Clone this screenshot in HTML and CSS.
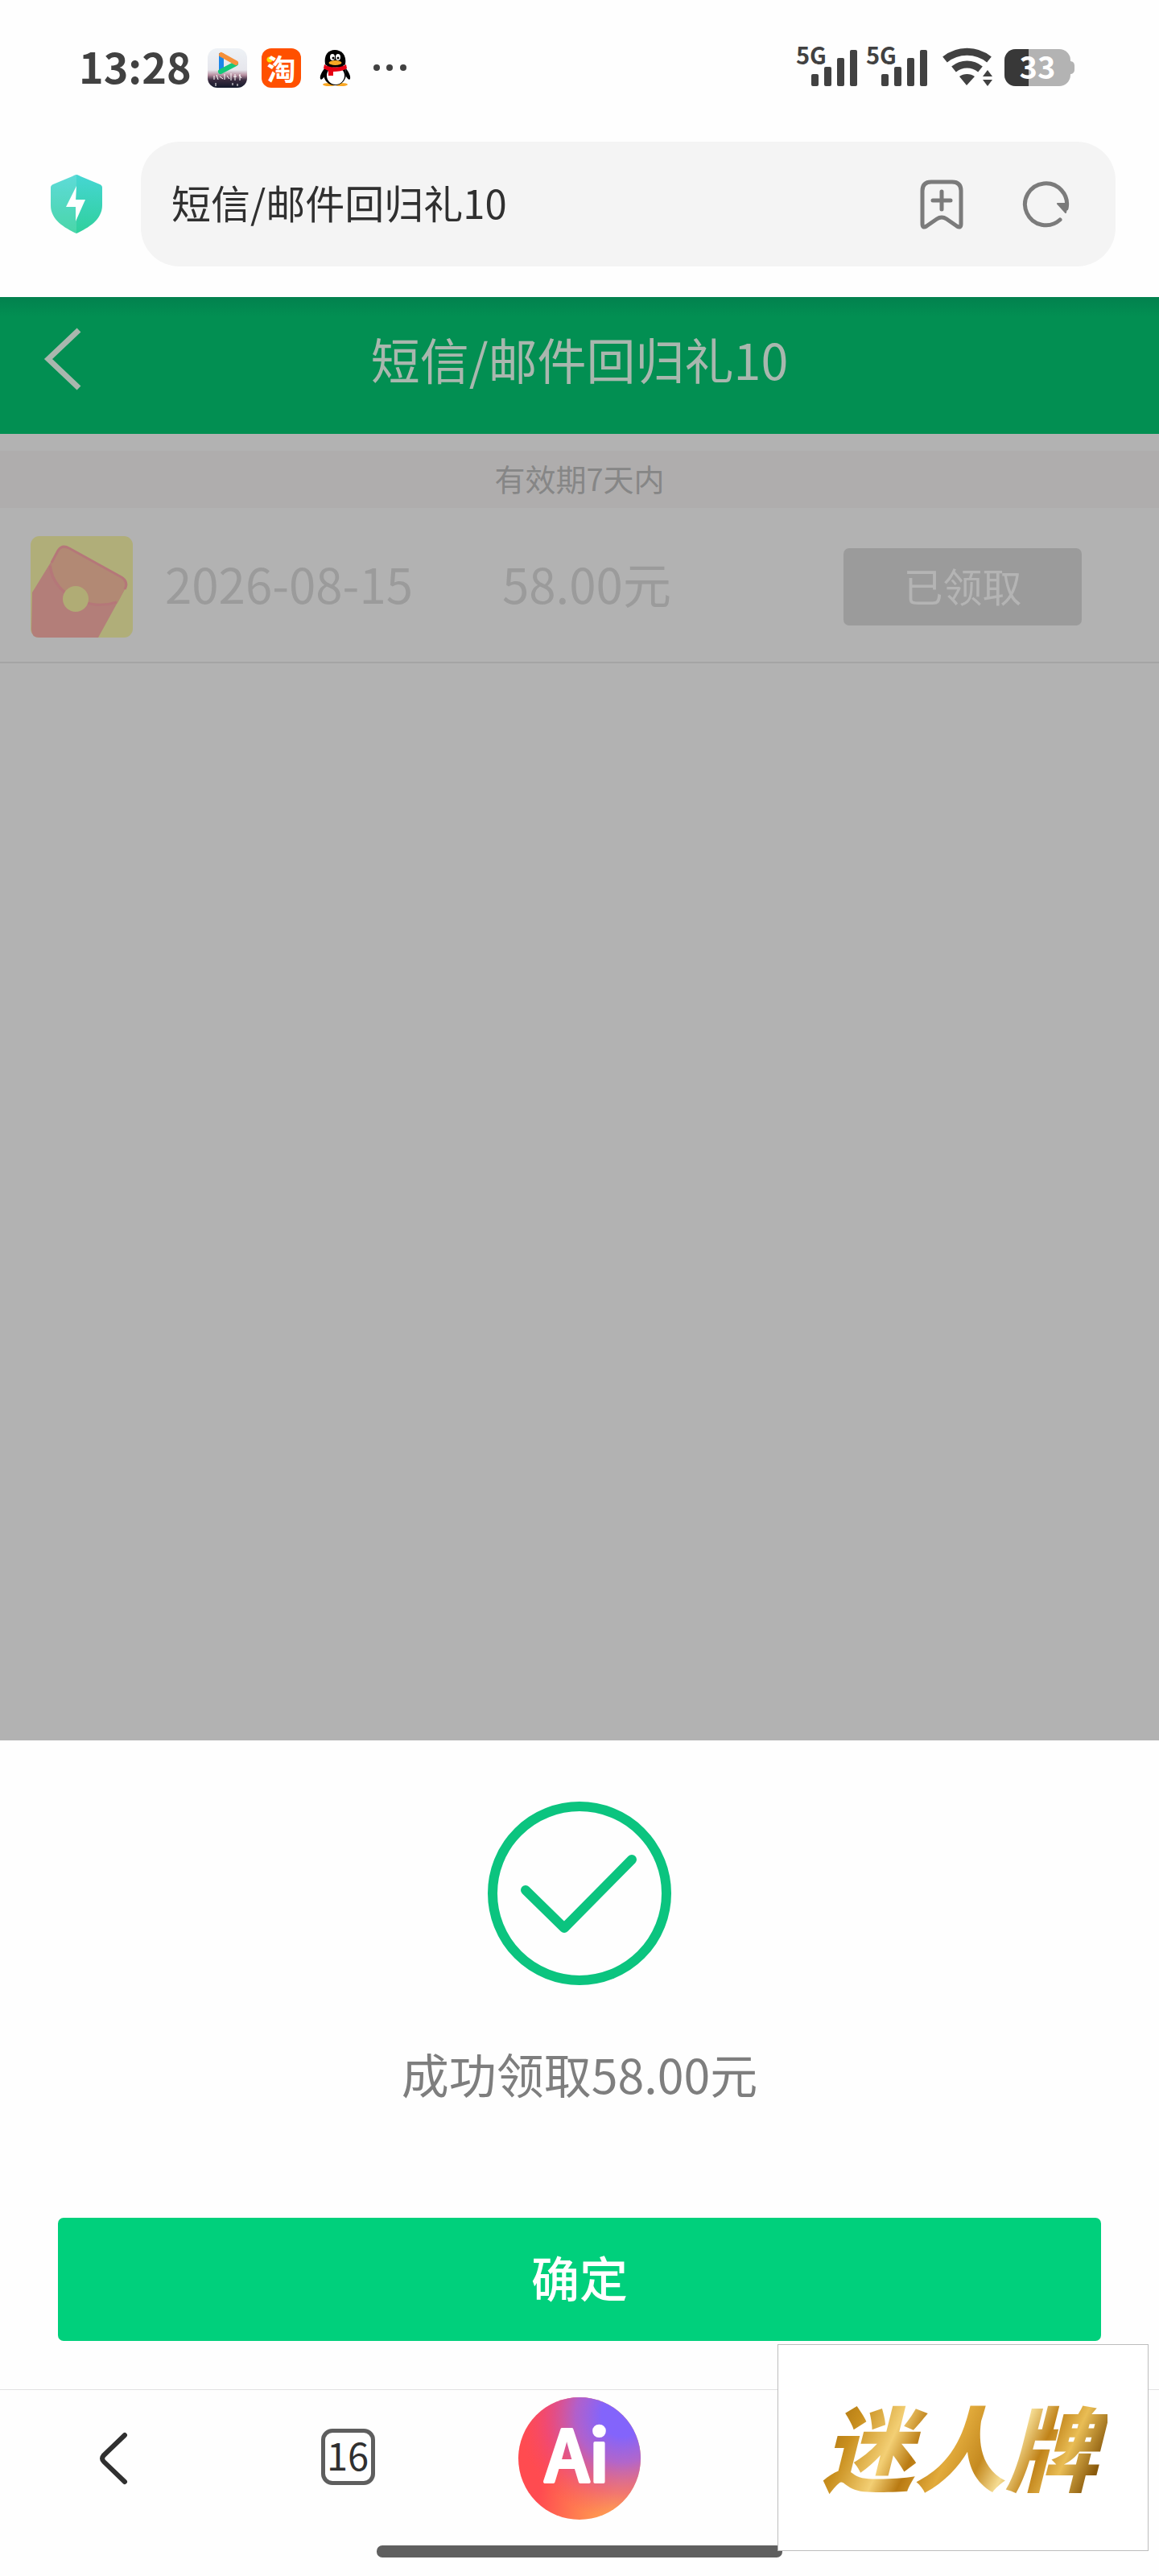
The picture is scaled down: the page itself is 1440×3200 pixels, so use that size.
FILE: index.html
```
<!doctype html>
<html lang="zh-CN">
    <head>
        <meta charset="UTF-8">
        <meta name="viewport" content="width=device-width, initial-scale=1.0">
        <title>短信/邮件回归礼10</title>
        <link rel="stylesheet" href="styles.css">
    </head>
    <body>
        <div class="status">
            <span class="clock">13:28</span>
            <svg class="app" viewBox="0 0 49 49">
                <defs>
                    <linearGradient id="sky" x1="0" y1="0" x2="0" y2="1">
                        <stop offset="0" stop-color="#eef2f6"/>
                        <stop offset=".55" stop-color="#e6e6ec"/>
                        <stop offset=".68" stop-color="#b78fa0"/>
                        <stop offset=".8" stop-color="#3b2c40"/>
                        <stop offset="1" stop-color="#141a2c"/>
                    </linearGradient>
                </defs>
                <rect width="49" height="49" rx="12" fill="url(#sky)"/>
                <path d="M17 6v24" stroke="#1b86e8" stroke-width="6"/>
                <path d="M16 29l19-10" stroke="#14c878" stroke-width="6" stroke-linecap="round"/>
                <path d="M17 8l18 10" stroke="#f6903a" stroke-width="6" stroke-linecap="round"/>
                <path d="M8 34v5m3-6l2 6m2-4l4 3m2-6v7m3-5l3 4m2-7v9m3-5h4m-2-3v8m5-7l3 4m-2-5v8M10 43v4m21-4v3m6-2v3" stroke="#fff" fill="none"/>
            </svg>
            <div class="app tao">淘</div>
            <svg class="app" viewBox="0 0 49 49">
                <ellipse cx="17" cy="45" rx="8" ry="2" fill="#f9a825"/>
                <ellipse cx="32" cy="45" rx="8" ry="2" fill="#f9a825"/>
                <path d="M12 24c-4 5-7 10-6 14 1 2 3 0 5-3zM37 24c4 5 7 10 6 14-1 2-3 0-5-3z" fill="#000"/>
                <ellipse cx="24" cy="32" rx="14" ry="14" fill="#000"/>
                <ellipse cx="25" cy="34" rx="11" ry="11" fill="#fff"/>
                <path d="M12 20C10 8 16 2 24 2s15 6 13 18c-6 5-19 5-25 0z" fill="#000"/>
                <ellipse cx="21" cy="11" rx="3" ry="4" fill="#fff"/>
                <ellipse cx="28" cy="11" rx="3" ry="4" fill="#fff"/>
                <circle cx="22" cy="12" r="1.5"/>
                <circle cx="28" cy="12" r="1.5"/>
                <ellipse cx="24.500" cy="18" rx="8" ry="3" fill="#f9a825"/>
                <path d="M11 20c7 5 20 5 27 0l1 5c-5 3-11 4-17 4v5h-6v-6l-6-3z" fill="#e60012"/>
            </svg>
            <svg class="dots" viewBox="0 0 42 10">
                <g fill="#414141"><circle cx="5" cy="5" r="4"/><circle cx="21" cy="5" r="4"/><circle cx="38" cy="5" r="4"/></g>
            </svg>
            <div class="right">
                <div class="signal">
                    <span>5G</span>
                    <svg viewBox="0 0 58 46">
                        <g fill="#414141"><rect x="0" y="31" width="9" height="15" rx="2"/><rect x="16" y="22" width="9" height="24" rx="2"/><rect x="32" y="11" width="9" height="35" rx="2"/><rect x="48" y="1" width="9" height="45" rx="2"/></g>
                    </svg>
                </div>
                <div class="signal">
                    <span>5G</span>
                    <svg viewBox="0 0 58 46">
                        <g fill="#414141"><rect x="0" y="31" width="9" height="15" rx="2"/><rect x="16" y="22" width="9" height="24" rx="2"/><rect x="32" y="11" width="9" height="35" rx="2"/><rect x="48" y="1" width="9" height="45" rx="2"/></g>
                    </svg>
                </div>
                <svg class="wifi" viewBox="0 0 63 46">
                    <path d="M3 13c16-13 39-13 55 0M14 25c10-8 23-8 33 0" stroke="#414141" stroke-width="9" fill="none"/>
                    <path d="M21 34c5-4 14-4 19 0L30 45zM56 26l6 8H50zM56 46l6-8H50z" fill="#414141"/>
                </svg>
                <svg class="battery" viewBox="0 0 88 46">
                    <path d="M81 15c4 0 6 2 6 6v4c0 4-2 6-6 6z" fill="#b3b3b3"/>
                    <rect width="82" height="46" rx="14" fill="#b3b3b3"/>
                    <path d="M30 0v46H14C6 46 0 40 0 32V14C0 6 6 0 14 0z" fill="#383838"/>
                    <text class="level" x="41" y="37" text-anchor="middle">33</text>
                </svg>
            </div>
        </div>

        <form class="address">
            <svg class="shield" viewBox="0 0 64 73">
                <defs>
                    <linearGradient id="mint" x1="0" y1="0" x2="0" y2="1">
                        <stop offset="0" stop-color="#46d6d3"/>
                        <stop offset="1" stop-color="#2fd09c"/>
                    </linearGradient>
                </defs>
                <path d="M32 0c2 0 3 1 5 2l24 10c2 1 3 2 3 4v22c0 18-17 28-32 35C17 66 0 56 0 38V16c0-2 1-3 3-4L27 2c2-1 3-2 5-2z" fill="url(#mint)"/>
                <path d="M32 0c-2 0-3 1-5 2L3 12c-2 1-3 2-3 4v22c0 18 17 28 32 35z" fill="#fff" fill-opacity=".13"/>
                <path d="M32 14L19 40h12v18l12-27H31z" fill="#fff"/>
            </svg>
            <div class="field">
                <input type="text" aria-label="网址" value="短信/邮件回归礼10">
                <button type="button" aria-label="添加书签">
                    <svg class="mark" viewBox="0 0 54 62">
                        <path d="M14 3h26q11 0 11 11v41q0 6-5 3L33 49q-6-4-12 0L8 58q-5 3-5-3V14Q3 3 14 3zM27 15v22M16 26h22"/>
                    </svg>
                </button>
                <button type="button" aria-label="刷新">
                    <svg class="reload" viewBox="0 0 58 58">
                        <path d="M46 48A26 26 0 1 1 54 34"/>
                        <path d="M43 28h12l-2 11z"/>
                    </svg>
                </button>
            </div>
        </form>

        <main class="page">
            <header class="title">
                <button type="button" aria-label="返回">
                    <svg class="arrow" viewBox="0 0 44 76"><path d="M42 2L4 38l38 36"/></svg>
                </button>
                <h1>短信/邮件回归礼10</h1>
            </header>
            <p class="notice">有效期7天内</p>
            <div class="gift">
                <svg class="packet" viewBox="0 0 127 126">
                    <rect width="127" height="126" rx="11" fill="#b0ae79"/>
                    <path d="M2 70L34 18q5-8 14-3l65 36q9 6 4 15L84 126H11Q1 126 1 116z" fill="#b37e79"/>
                    <path d="M26 33L34 18q5-8 14-3l65 36q9 6 4 15l-9 17c-19 6-32 3-43-3-23-8-38-24-39-47z" fill="#b28974"/>
                    <path d="M24 37c2 20 19 39 40 44 16 6 31 5 43 1M26 33L34 18q5-8 14-3l65 36q9 6 4 15" stroke="#b57779" stroke-width="3" fill="none"/>
                    <circle cx="56" cy="78" r="16" fill="#b0ac75"/>
                </svg>
                <span class="date">2026-08-15</span>
                <span>58.00元</span>
                <button type="button" disabled>已领取</button>
            </div>
        </main>

        <section class="sheet">
            <svg class="check" viewBox="0 0 228 228">
                <circle cx="114" cy="114" r="108"/>
                <path d="M47 110l48 47 84-85"/>
            </svg>
            <p>成功领取58.00元</p>
            <button type="button">确定</button>
        </section>

        <nav class="tabs">
            <button type="button" aria-label="后退">
                <svg class="back" viewBox="0 0 34 64"><path d="M31 3L5 28q-4 4 0 8l26 25"/></svg>
            </button>
            <button type="button"><span class="count">16</span></button>
            <button type="button">
                <svg class="ai" viewBox="0 0 152 152">
                    <defs>
                        <linearGradient id="warm" x1="0" y1=".6" x2="1" y2=".8">
                            <stop offset=".2" stop-color="#ff4b50"/>
                            <stop offset=".8" stop-color="#ffa650"/>
                        </linearGradient>
                        <radialGradient id="violet" cx=".85" cy=".15" r=".85">
                            <stop offset=".2" stop-color="#8364fb"/>
                            <stop offset=".45" stop-color="#a95fd8" stop-opacity=".9"/>
                            <stop offset=".75" stop-color="#e4488f" stop-opacity=".5"/>
                            <stop offset="1" stop-color="#f74a68" stop-opacity="0"/>
                        </radialGradient>
                    </defs>
                    <circle cx="76" cy="76" r="76" fill="url(#warm)"/>
                    <circle cx="76" cy="76" r="76" fill="url(#violet)"/>
                    <text x="73" y="105" text-anchor="middle">Ai</text>
                </svg>
            </button>
        </nav>
        <div class="home"></div>

        <div class="stamp"><span>迷人牌</span></div>
    </body>
</html>
```
FILE: styles.css
```
* {
    box-sizing: border-box;
}
body {
    position: relative;
    display: flex;
    flex-direction: column;
    min-height: 100vh;
    margin: 0;
    background: #fefefe;
    color: #303030;
    font-family: "Noto Sans CJK SC", sans-serif;
}
svg {
    display: block;
    flex: none;
    overflow: visible;
}
h1, p {
    margin: 0;
    font-weight: 400;
}
button {
    padding: 0;
    border: 0;
    background: none;
    color: inherit;
    font: inherit;
}

/* status bar */
.status {
    display: flex;
    align-items: center;
    gap: 18px;
    height: 168px;
    padding: 0 104px 0 98px;
}
.clock {
    width: 142px;
    padding-bottom: 4px;
    color: #414141;
    font-size: 52px;
    font-weight: 700;
    line-height: 76px;
}
.app {
    width: 49px;
    height: 49px;
}
.tao {
    border-radius: 12px;
    background: radial-gradient(circle at 10px 14px, #ffe100 3px, #ff5000 4px);
    color: #fff;
    font-size: 36px;
    font-weight: 700;
    line-height: 49px;
    text-align: center;
}
.dots {
    width: 42px;
    height: 10px;
    margin-left: 4px;
}
.right {
    display: flex;
    align-items: flex-end;
    gap: 10px;
    margin-left: auto;
    padding-bottom: 16px;
}
.signal {
    display: flex;
    align-items: flex-end;
    width: 77px;
}
.signal span {
    width: 19px;
    padding-bottom: 18px;
    color: #414141;
    font-size: 29px;
    font-weight: 700;
    line-height: 44px;
}
.signal svg {
    width: 58px;
    height: 46px;
}
.wifi {
    width: 63px;
    height: 46px;
    margin: 0 4px 0 8px;
}
.battery {
    width: 88px;
    height: 46px;
}
.level {
    fill: #fff;
    font-size: 38px;
    font-weight: 700;
}

/* address bar */
.address {
    display: flex;
    align-items: center;
    gap: 48px;
    margin: 0;
    padding: 8px 54px 38px 63px;
}
.shield {
    width: 64px;
    height: 73px;
}
.field {
    display: flex;
    flex: 1;
    align-items: center;
    gap: 74px;
    height: 155px;
    padding: 0 57px 0 38px;
    border-radius: 48px;
    background: #f4f4f4;
}
.field input {
    flex: 1;
    min-width: 0;
    padding: 0 0 6px;
    border: 0;
    background: none;
    color: #303030;
    font: 49px/72px "Noto Sans CJK SC", sans-serif;
}
.field path {
    fill: none;
    stroke: #7b7b7b;
    stroke-width: 5;
    stroke-linecap: round;
    stroke-linejoin: round;
}
.field .reload path + path {
    fill: #7b7b7b;
    stroke-width: 2;
}
.mark {
    width: 54px;
    height: 62px;
}
.reload {
    width: 58px;
    height: 58px;
}

/* gift list, dimmed under the sheet */
.page {
    flex: 1;
    background: #b2b2b2;
}
.title {
    display: grid;
    grid-template-columns: 100px 1fr 100px;
    align-items: center;
    height: 170px;
    margin-bottom: 21px;
    background: linear-gradient(#02814e, #028f52 24px);
    color: #a9b7ae;
    text-align: center;
}
.title h1 {
    font-size: 61px;
    line-height: 80px;
    padding-bottom: 16px;
}
.arrow {
    width: 44px;
    height: 76px;
    margin: 0 0 16px auto;
}
.arrow path {
    fill: none;
    stroke: #a9b7ae;
    stroke-width: 7;
}
.notice {
    padding-bottom: 4px;
    background: #afadad;
    color: #868686;
    font-size: 38px;
    line-height: 67px;
    text-align: center;
}
.gift {
    display: flex;
    align-items: center;
    gap: 40px;
    height: 193px;
    padding: 5px 96px 0 38px;
    border-bottom: 2px solid #a4a4a4;
    color: #9b9b9b;
    font-size: 60px;
    line-height: 80px;
}
.gift span {
    padding-bottom: 10px;
}
.packet {
    width: 127px;
    height: 126px;
}
.date {
    width: 379px;
}
.gift button {
    width: 296px;
    height: 96px;
    margin-left: auto;
    padding-bottom: 4px;
    border-radius: 7px;
    background: #9b9b9b;
    color: #b4b4b4;
    font-size: 49px;
}

/* result sheet */
.sheet {
    display: flex;
    flex-direction: column;
    align-items: center;
    padding: 76px 72px 60px;
    color: #7e7e7e;
}
.check {
    width: 228px;
    height: 228px;
}
.check * {
    fill: none;
    stroke: #0bc47f;
    stroke-width: 12;
    stroke-linecap: round;
    stroke-linejoin: round;
}
.sheet p {
    margin: 68px 0 137px;
    font-size: 59px;
    line-height: 84px;
}
.sheet button {
    width: 100%;
    height: 153px;
    padding-bottom: 8px;
    border-radius: 7px;
    background: #00d07c;
    color: #fff;
    font-size: 60px;
    font-weight: 500;
}

/* browser toolbar */
.tabs {
    display: grid;
    grid-template-columns: repeat(5, 1fr);
    padding: 9px 0 32px;
    border-top: 1px solid #e2e2e2;
}
.tabs button {
    display: flex;
    align-items: center;
    justify-content: center;
}
.back {
    width: 34px;
    height: 64px;
    margin-right: 7px;
}
.back path {
    fill: none;
    stroke: #303030;
    stroke-width: 6;
    stroke-linecap: round;
}
.count {
    width: 67px;
    height: 70px;
    margin-bottom: 4px;
    border: 5px solid #5e5e5e;
    border-radius: 14px;
    font-size: 47px;
    line-height: 54px;
}
.ai {
    width: 152px;
    height: 152px;
}
.ai text {
    fill: #fff;
    stroke: #fff;
    stroke-width: 4;
    stroke-linejoin: round;
    font-size: 88px;
    font-weight: 500;
}
.home {
    width: 35%;
    height: 15px;
    margin: 0 auto 23px;
    border-radius: 7px;
    background: #5f5f5f;
}

/* gold stamp over the corner */
.stamp {
    position: absolute;
    right: 13px;
    bottom: 31px;
    display: flex;
    align-items: center;
    justify-content: center;
    width: 461px;
    height: 257px;
    padding: 0 8px 8px 0;
    border: 1px solid #bdbdbd;
    background: #fff;
}
.stamp span {
    padding: 0 12px;
    background: linear-gradient(115deg, #a8700f 8%, #c98f1e 18%, #f3cf74 30%, #b97a12 38%, #e2ab3c 48%, #c58a20 58%, #f5dc92 66%, #c08218 74%, #e9bd55 82%, #8a5a0c 92%);
    -webkit-background-clip: text;
    background-clip: text;
    color: transparent;
    font-size: 114px;
    font-style: italic;
    font-weight: 900;
    line-height: 150px;
}
```
